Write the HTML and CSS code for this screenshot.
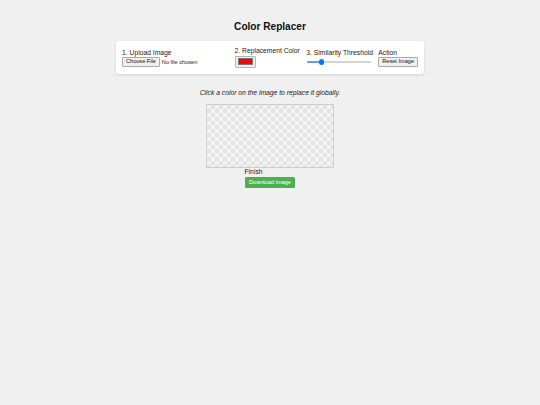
FILE: index.html
```html
<!DOCTYPE html>
<html lang="en">
<head>
<meta charset="utf-8">
<title>Color Replacer</title>
<link rel="stylesheet" href="styles.css">
</head>
<body>
  <h1 class="title">Color Replacer</h1>
  <div class="card">
    <div class="group group-upload">
      <label class="label" for="file">1. Upload Image</label>
      <div class="file-row">
        <label class="btn" for="file">Choose File</label>
        <span class="file-name">No file chosen</span>
        <input class="file-hidden" id="file" type="file" accept="image/*">
      </div>
    </div>
    <div class="group group-color">
      <label class="label" for="color">2. Replacement Color</label>
      <input class="color" id="color" type="color" value="#ff0000">
    </div>
    <div class="group group-threshold">
      <label class="label" for="threshold">3. Similarity Threshold</label>
      <input class="range" id="threshold" type="range" min="0" max="100" value="20" style="--fill: 20%">
    </div>
    <div class="group group-action">
      <span class="label">Action</span>
      <button class="btn" type="button">Reset Image</button>
    </div>
  </div>
  <p class="hint">Click a color on the image to replace it globally.</p>
  <div class="stage">
    <div class="canvas"></div>
  </div>
  <div class="finish">
    <div class="finish-inner">
      <span class="label">Finish</span>
      <button class="btn-download" type="button">Download Image</button>
    </div>
  </div>
</body>
</html>
```
FILE: styles.css
```css
html, body {
  margin: 0;
  padding: 0;
}
body {
  background: #f0f0f0;
  font-family: "Liberation Sans", Arial, sans-serif;
  color: #1a1a1a;
  padding-top: 21.4px;
}
.title {
  margin: 0 0 9px;
  text-align: center;
  font-size: 10.1px;
  font-weight: bold;
  color: #111;
}
.card {
  width: 296px;
  margin: 0 auto;
  padding: 6px;
  background: #fff;
  border-radius: 3px;
  box-shadow: 0 1px 3px rgba(0, 0, 0, 0.12);
  display: flex;
  align-items: center;
  gap: 6px;
}
.group {
  display: flex;
  flex-direction: column;
  align-items: flex-start;
}
.group-upload { width: 107px; }
.group-color { width: 66px; }
.group-threshold { width: 66px; }
.group-action { flex: 1; }
.label {
  display: block;
  font-size: 6.75px;
  margin-bottom: 1.5px;
  white-space: nowrap;
}
.file-row {
  display: flex;
  align-items: center;
  gap: 2px;
}
.file-hidden {
  display: none;
}
.btn {
  display: inline-block;
  box-sizing: border-box;
  height: 9.5px;
  padding: 0 3px;
  border: 1px solid #a9a9a9;
  border-radius: 1px;
  background: #efefef;
  font-family: inherit;
  font-size: 5.6px;
  line-height: 7.5px;
  color: #111;
  white-space: nowrap;
}
.file-name {
  font-size: 5.6px;
  white-space: nowrap;
}
.color {
  -webkit-appearance: none;
  appearance: none;
  box-sizing: border-box;
  width: 21px;
  height: 12px;
  margin: 0;
  padding: 1.5px 2px;
  border: 1px solid #b5b5b5;
  border-radius: 1px;
  background: #efefef;
}
.color::-webkit-color-swatch-wrapper {
  padding: 0;
}
.color::-webkit-color-swatch {
  border: 0.5px solid #777;
  border-radius: 0;
}
.range {
  -webkit-appearance: none;
  appearance: none;
  width: 64px;
  height: 9.5px;
  margin: 0 0 0 1px;
  background: transparent;
}
.range::-webkit-slider-runnable-track {
  height: 2px;
  border-radius: 1px;
  background: linear-gradient(to right, #0075ff 0 var(--fill), #e4e4e4 var(--fill) 100%);
  box-shadow: inset 0 0 0 0.5px #c4c4c4;
}
.range::-webkit-slider-thumb {
  -webkit-appearance: none;
  appearance: none;
  width: 5.5px;
  height: 5.5px;
  margin-top: -1.75px;
  border-radius: 50%;
  background: #0075ff;
  border: none;
}
.hint {
  margin: 15px 0 8.3px;
  text-align: center;
  font-size: 6.75px;
  font-style: italic;
}
.stage {
  display: flex;
  justify-content: center;
}
.canvas {
  width: 126px;
  height: 62px;
  border: 1px solid #cfcfcf;
  background-color: #f4f4f4;
  background-image:
    linear-gradient(45deg, #e2e2e2 25%, transparent 25%, transparent 75%, #e2e2e2 75%),
    linear-gradient(45deg, #e2e2e2 25%, transparent 25%, transparent 75%, #e2e2e2 75%);
  background-size: 8px 8px;
  background-position: 0 0, 4px 4px;
}
.finish {
  display: flex;
  justify-content: center;
}
.finish-inner {
  display: flex;
  flex-direction: column;
  align-items: flex-start;
}
.finish-inner .label {
  margin-bottom: 2px;
}
.btn-download {
  box-sizing: border-box;
  height: 10.5px;
  padding: 0 4.5px;
  border: none;
  border-radius: 1.5px;
  background: #4caf50;
  color: #fff;
  font-family: inherit;
  font-size: 5.6px;
  line-height: 10.5px;
  white-space: nowrap;
}
```
